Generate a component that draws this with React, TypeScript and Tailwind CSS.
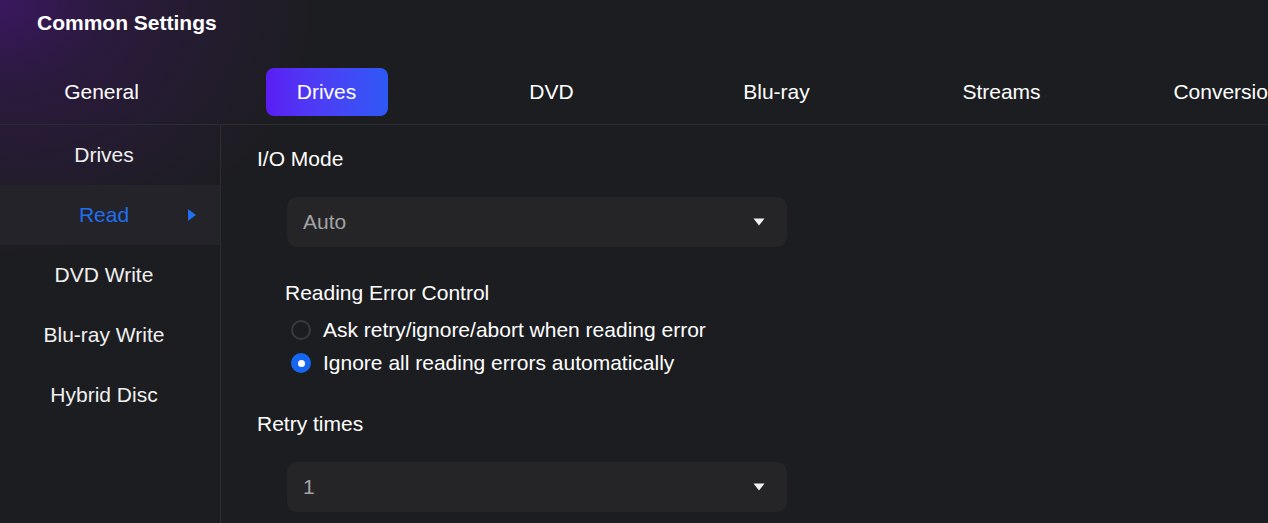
import React from "react";

const tabs = ["General", "Drives", "DVD", "Blu-ray", "Streams", "Conversion"];
const side = ["Drives", "Read", "DVD Write", "Blu-ray Write", "Hybrid Disc"];

function Caret() {
  return (
    <svg width="12" height="8" viewBox="0 0 12 8">
      <path d="M0.5 0.5 H11.5 L6 7.5 Z" fill="#f2f2f2" />
    </svg>
  );
}

function Select({ value }: { value: string }) {
  return (
    <div className="ml-[30px] w-[500px] h-[50px] rounded-[10px] bg-[#252528] flex items-center justify-between pl-4 pr-[22px]">
      <span className="text-[21px] text-[#a3a3a6]">{value}</span>
      <Caret />
    </div>
  );
}

export default function App() {
  return (
    <div
      className="w-[1268px] h-[523px] overflow-hidden text-white bg-[#1c1d20] bg-[radial-gradient(ellipse_320px_260px_at_0px_0px,#3a1760_0%,#2a1a3c_35%,#1c1d20_100%)]"
      style={{ fontFamily: '"Liberation Sans", Arial, sans-serif' }}
    >
      <div className="h-[45px] pl-[37px] flex items-center">
        <span className="text-[21px] font-bold">Common Settings</span>
      </div>
      <div className="h-[80px] border-b border-[#2c2d30] flex items-end pb-[8px]">
        <div className="flex items-center ml-[-11px]">
          {tabs.map((t) => (
            <div key={t} className="w-[225px] flex justify-center shrink-0">
              {t === "Drives" ? (
                <div className="w-[122px] h-[48px] rounded-[8px] bg-gradient-to-r from-[#5a1cf4] to-[#2d58f6] flex items-center justify-center text-[21px]">
                  {t}
                </div>
              ) : (
                <div className="h-[48px] flex items-center text-[21px] whitespace-nowrap">{t}</div>
              )}
            </div>
          ))}
        </div>
      </div>
      <div className="flex">
        <div className="w-[221px] h-[400px] border-r border-[#2c2d30]">
          {side.map((s) => (
            <div
              key={s}
              className={`h-[60px] flex items-center justify-center relative pr-[12px] ${
                s === "Read" ? "bg-[#232329] text-[#1f6ff0]" : "text-[#f0f0f0]"
              }`}
            >
              <span className="text-[21px]">{s}</span>
              {s === "Read" && (
                <svg className="absolute left-[188px] top-[24px]" width="8" height="12" viewBox="0 0 8 12">
                  <path d="M0 0 L8 6 L0 12 Z" fill="#1f6ff0" />
                </svg>
              )}
            </div>
          ))}
        </div>
        <div className="flex-1 pl-[36px] text-[21px] leading-[24px]">
          <div className="mt-[22px] h-[24px]">I/O Mode</div>
          <div className="mt-[26px]">
            <Select value="Auto" />
          </div>
          <div className="ml-[28px] mt-[34px] h-[24px]">Reading Error Control</div>
          <div className="ml-[34px] mt-[13px] flex flex-col gap-[9px]">
            <div className="flex items-center gap-[12px] h-[24px]">
              <span className="w-[20px] h-[20px] rounded-full border-2 border-[#3a3b3f] bg-[#1c1d20]" />
              <span>Ask retry/ignore/abort when reading error</span>
            </div>
            <div className="flex items-center gap-[12px] h-[24px]">
              <span className="w-[20px] h-[20px] rounded-full bg-[#1666f2] flex items-center justify-center">
                <span className="w-[7px] h-[7px] rounded-full bg-white" />
              </span>
              <span>Ignore all reading errors automatically</span>
            </div>
          </div>
          <div className="mt-[37px] h-[24px]">Retry times</div>
          <div className="mt-[26px]">
            <Select value="1" />
          </div>
        </div>
      </div>
    </div>
  );
}
